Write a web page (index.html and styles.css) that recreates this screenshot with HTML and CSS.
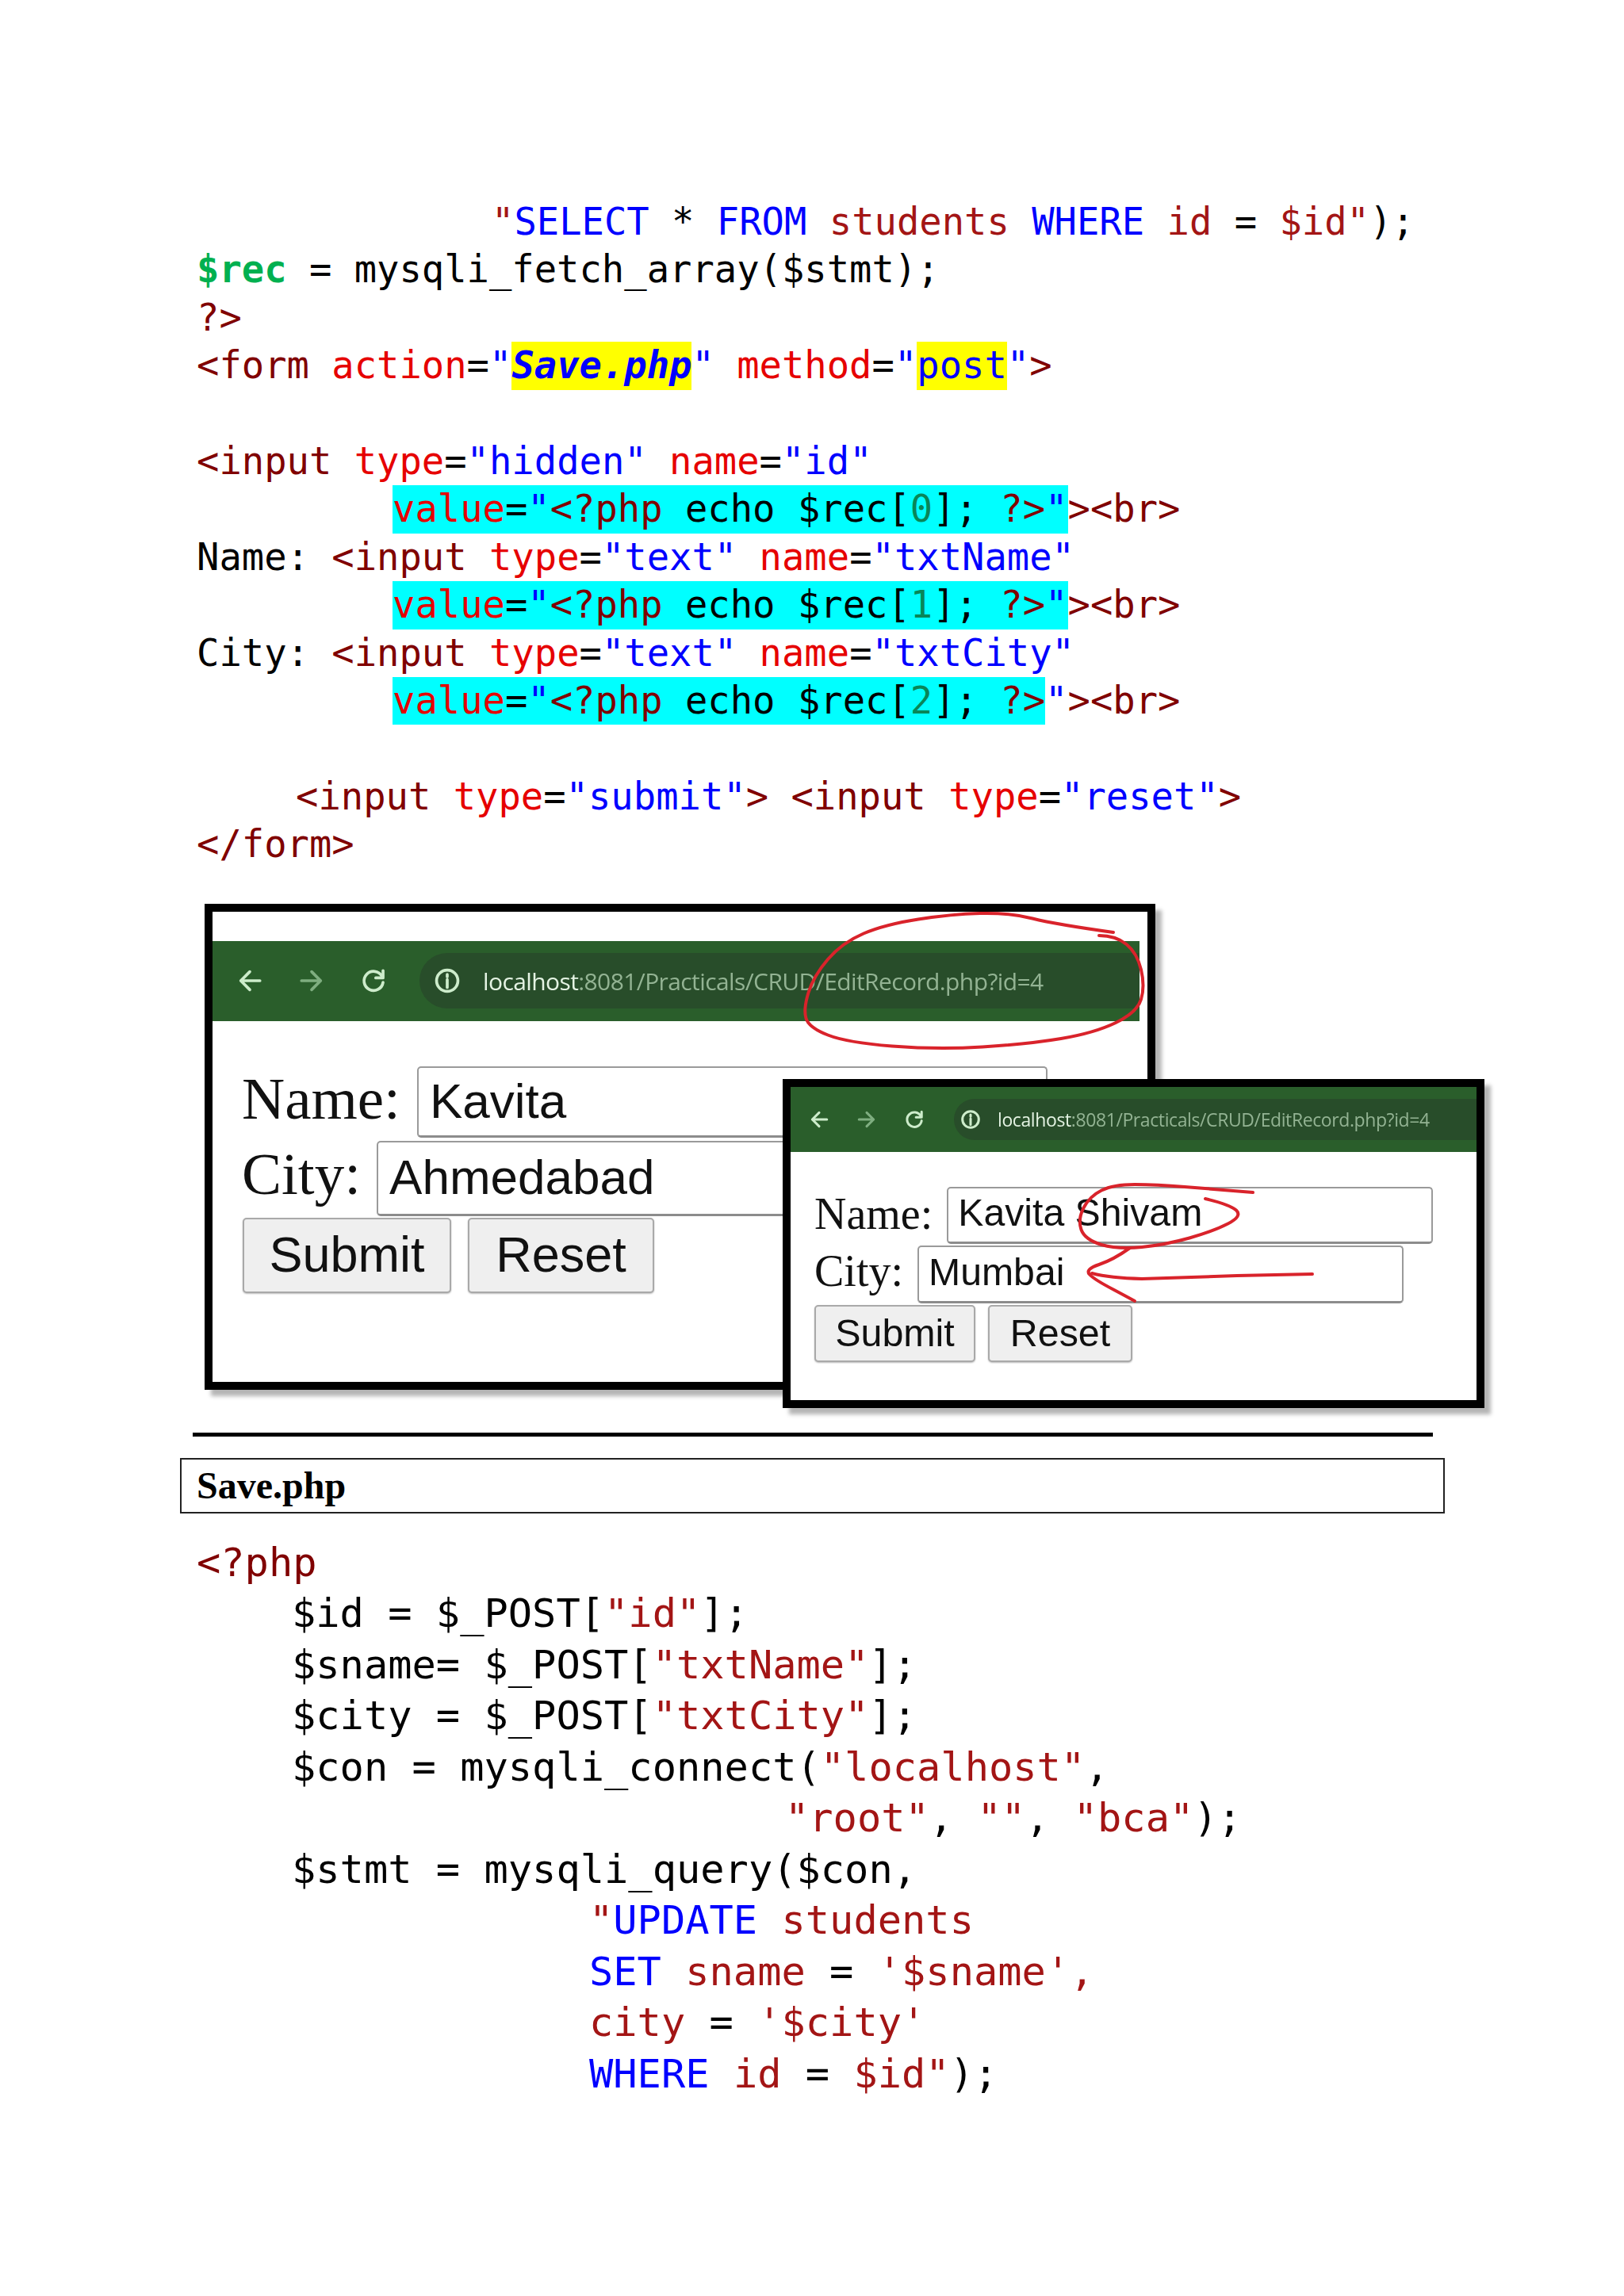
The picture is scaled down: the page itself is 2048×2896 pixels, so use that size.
FILE: index.html
```html
<!DOCTYPE html>
<html lang="en">
<head>
<meta charset="utf-8">
<title>Save.php</title>
<link rel="stylesheet" href="styles.css">
</head>
<body>
<svg class="defs" width="0" height="0" aria-hidden="true">
  <symbol id="i-back" viewBox="0 0 24 24"><path d="M21 12H4M12 4l-8 8 8 8"/></symbol>
  <symbol id="i-fwd" viewBox="0 0 24 24"><path d="M3 12h17M12 4l8 8-8 8"/></symbol>
  <symbol id="i-reload" viewBox="0 0 24 24"><path d="M19.5 8A8.5 8.5 0 1 0 20.5 13.5"/><path d="M20.5 3v6.5H14"/></symbol>
  <symbol id="i-info" viewBox="0 0 24 24"><circle cx="12" cy="12" r="9.5"/><path d="M12 11v7M12 6.5v2"/></symbol>
</svg>

<pre class="code code-a"><span class="ln in1"><span class="s">"</span><span class="k">SELECT</span> * <span class="k">FROM</span> <span class="s">students</span> <span class="k">WHERE</span> <span class="s">id</span> = <span class="s">$id"</span>);</span>
<span class="ln"><span class="g">$rec</span> = mysqli_fetch_array($stmt);</span>
<span class="ln"><span class="t">?&gt;</span></span>
<span class="ln"><span class="t">&lt;form</span> <span class="a">action</span>=<span class="k">"</span><span class="hy bi">Save.php</span><span class="k">"</span> <span class="a">method</span>=<span class="k">"</span><span class="hy k">post</span><span class="k">"</span><span class="t">&gt;</span></span>
<span class="ln"> </span>
<span class="ln"><span class="t">&lt;input</span> <span class="a">type</span>=<span class="k">"hidden"</span> <span class="a">name</span>=<span class="k">"id"</span></span>
<span class="ln in2"><span class="hc"><span class="a">value</span>=<span class="k">"</span><span class="t">&lt;?php</span> echo $rec[<span class="n">0</span>]; <span class="t">?&gt;</span><span class="k">"</span></span><span class="t">&gt;&lt;br&gt;</span></span>
<span class="ln">Name: <span class="t">&lt;input</span> <span class="a">type</span>=<span class="k">"text"</span> <span class="a">name</span>=<span class="k">"txtName"</span></span>
<span class="ln in2"><span class="hc"><span class="a">value</span>=<span class="k">"</span><span class="t">&lt;?php</span> echo $rec[<span class="n">1</span>]; <span class="t">?&gt;</span><span class="k">"</span></span><span class="t">&gt;&lt;br&gt;</span></span>
<span class="ln">City: <span class="t">&lt;input</span> <span class="a">type</span>=<span class="k">"text"</span> <span class="a">name</span>=<span class="k">"txtCity"</span></span>
<span class="ln in2"><span class="hc"><span class="a">value</span>=<span class="k">"</span><span class="t">&lt;?php</span> echo $rec[<span class="n">2</span>]; <span class="t">?&gt;</span></span><span class="k">"</span><span class="t">&gt;&lt;br&gt;</span></span>
<span class="ln"> </span>
<span class="ln in3"><span class="t">&lt;input</span> <span class="a">type</span>=<span class="k">"submit"</span><span class="t">&gt;</span> <span class="t">&lt;input</span> <span class="a">type</span>=<span class="k">"reset"</span><span class="t">&gt;</span></span>
<span class="ln"><span class="t">&lt;/form&gt;</span></span></pre>

<div class="figure">
  <section class="win win-a">
    <div class="bar">
      <svg class="ic"><use href="#i-back"/></svg>
      <svg class="ic dim"><use href="#i-fwd"/></svg>
      <svg class="ic"><use href="#i-reload"/></svg>
      <div class="pill">
        <svg class="ic"><use href="#i-info"/></svg>
        <span class="url"><b>localhost</b>:8081/Practicals/CRUD/EditRecord.php?id=4</span>
      </div>
    </div>
    <div class="form">
      <div class="row row-name"><span class="lab">Name:</span><div class="field">Kavita</div></div>
      <div class="row row-city"><span class="lab">City:</span><div class="field">Ahmedabad</div></div>
      <div class="row row-btn"><div class="btn btn-s">Submit</div><div class="btn btn-r">Reset</div></div>
    </div>
  </section>
  <section class="win win-b">
    <div class="bar">
      <svg class="ic"><use href="#i-back"/></svg>
      <svg class="ic dim"><use href="#i-fwd"/></svg>
      <svg class="ic"><use href="#i-reload"/></svg>
      <div class="pill">
        <svg class="ic"><use href="#i-info"/></svg>
        <span class="url"><b>localhost</b>:8081/Practicals/CRUD/EditRecord.php?id=4</span>
      </div>
    </div>
    <div class="form">
      <div class="row row-name"><span class="lab">Name:</span><div class="field">Kavita Shivam</div></div>
      <div class="row row-city"><span class="lab">City:</span><div class="field">Mumbai</div></div>
      <div class="row row-btn"><div class="btn btn-s">Submit</div><div class="btn btn-r">Reset</div></div>
    </div>
  </section>
  <svg class="ink" viewBox="0 1140 2048 667" aria-hidden="true">
    <path d="M1404 1176Q1332 1166 1302 1158.5Q1272 1151 1236 1152Q1200 1153 1158 1159.5Q1116 1166 1089 1177.5Q1062 1189 1044 1210Q1026 1231 1019.5 1252Q1013 1273 1016.5 1284.5Q1020 1296 1044 1305.5Q1068 1315 1125 1319.5Q1182 1324 1239 1320.5Q1296 1317 1338 1310Q1380 1303 1407 1290Q1434 1277 1439 1260.5Q1444 1244 1439 1223Q1434 1202 1420.5 1191Q1407 1180 1386 1180"/>
    <path d="M1580 1504Q1530 1500 1494 1497Q1458 1494 1431 1494Q1404 1494 1389 1501.5Q1374 1509 1366.5 1523.5Q1359 1538 1363.5 1551Q1368 1563.5 1389 1570Q1410 1576 1440 1573Q1470 1570 1500 1561.5Q1530 1553 1548.5 1543.5Q1567 1534 1559 1526.5Q1550.5 1519 1520 1512"/>
    <path d="M1425 1574Q1404 1589 1386 1595Q1368 1601 1374 1607.5Q1380 1614 1405 1627Q1420 1635 1431 1641"/>
    <path d="M1377 1606Q1400 1612 1440 1613Q1500 1611 1560 1609L1655 1607"/>
  </svg>
</div>

<div class="rule"></div>
<div class="titlebox">Save.php</div>

<pre class="code code-b"><span class="ln"><span class="t">&lt;?php</span></span>
<span class="ln in4">$id = $_POST[<span class="s">"id"</span>];</span>
<span class="ln in4">$sname= $_POST[<span class="s">"txtName"</span>];</span>
<span class="ln in4">$city = $_POST[<span class="s">"txtCity"</span>];</span>
<span class="ln in4">$con = mysqli_connect(<span class="s">"localhost"</span>,</span>
<span class="ln in5"><span class="s">"root"</span>, <span class="s">""</span>, <span class="s">"bca"</span>);</span>
<span class="ln in4">$stmt = mysqli_query($con,</span>
<span class="ln in6"><span class="s">"</span><span class="k">UPDATE</span> <span class="s">students</span></span>
<span class="ln in6"><span class="k">SET</span> <span class="s">sname</span> = <span class="s">'$sname',</span></span>
<span class="ln in6"><span class="s">city</span> = <span class="s">'$city'</span></span>
<span class="ln in6"><span class="k">WHERE</span> <span class="s">id</span> = <span class="s">$id"</span>);</span></pre>
</body>
</html>
```

FILE: styles.css
```css
html, body { margin: 0; padding: 0; background: #fff; }
body { padding-top: 250px; min-height: 2646px; color: #000; }
.defs { position: absolute; }

.code { margin: 0; padding-left: 248px; font-family: "DejaVu Sans Mono", monospace; color: #000; white-space: normal; }
.code-a { font-size: 47.15px; line-height: 60.4px; }
.code-b { font-size: 50.35px; line-height: 64.5px; margin-top: 30px; }
.ln { display: block; white-space: pre; }
.in1 { padding-left: 372px; }
.in2 { padding-left: 247px; }
.in3 { padding-left: 125px; }
.in4 { padding-left: 120px; }
.in5 { padding-left: 742px; }
.in6 { padding-left: 495px; }

.t { color: #800000; }
.a { color: #e60000; }
.k { color: #0000ff; }
.s { color: #a31515; }
.n { color: #098658; }
.g { color: #00b050; font-weight: bold; }
.bi { color: #0000ff; font-weight: bold; font-style: italic; }
.hy { display: inline-block; background: #ffff00; }
.hc { display: inline-block; background: #00ffff; }

.figure { position: relative; height: 667px; margin-top: 44px; }
.ink { position: absolute; left: 0; top: 0; width: 2048px; height: 667px; fill: none; stroke: #d9232b; stroke-width: 4; stroke-linecap: round; stroke-linejoin: round; pointer-events: none; }

.win { position: absolute; box-sizing: border-box; background: #fff; border: 10px solid #000; box-shadow: 8px 8px 5px #b5b5b5; overflow: hidden; }
.win-a { left: 258px; top: 0; width: 1199px; height: 613px; }
.win-b { left: 987px; top: 221px; width: 885px; height: 415px; }

.bar { display: flex; align-items: center; box-sizing: border-box; background: #2a5e2b; filter: blur(0.6px); }
.pill { display: flex; align-items: center; flex: 1; background: #284d2a; }
.ic { flex: none; fill: none; stroke: #cdeccb; stroke-linecap: round; stroke-linejoin: round; }
.ic.dim { stroke: #7fae80; }
.url { font-family: "Open Sans", sans-serif; color: #93b393; white-space: nowrap; }
.url b { font-weight: 400; color: #e4f3e3; }

.form { display: flex; flex-direction: column; filter: blur(0.5px); }
.row { display: flex; align-items: center; }
.lab { font-family: "Liberation Serif", serif; color: #111; }
.field { box-sizing: border-box; flex: none; display: flex; align-items: center; height: 100%; background: #fff; font-family: "Liberation Sans", sans-serif; color: #111; border: 2px solid #9a9a9a; border-bottom: 3px solid #8c8c8c; border-radius: 5px; }
.btn { box-sizing: border-box; display: flex; align-items: center; justify-content: center; height: 100%; font-family: "Liberation Sans", sans-serif; color: #111; background: #efefef; border: 2px solid #a9a9a9; border-radius: 5px; box-shadow: 0 1px 2px #bbb; }

.win-a .bar { margin: 37px 10px 0 0; height: 101px; padding-left: 30px; gap: 44px; }
.win-a .ic { width: 34px; height: 34px; stroke-width: 2.6; }
.win-a .pill { height: 70px; margin-left: -3px; padding-left: 18px; gap: 28px; border-radius: 35px 0 0 35px; }
.win-a .url { font-size: 30px; letter-spacing: -0.6px; }
.win-a .form { padding: 57px 0 0 37px; }
.win-a .lab { font-size: 75px; }
.win-a .row-name { height: 90px; gap: 21px; }
.win-a .row-name .lab { margin-bottom: 8px; }
.win-a .row-city { height: 95px; margin-top: 4px; gap: 20px; }
.win-a .row-city .lab { margin-bottom: 10px; }
.win-a .field { width: 795px; padding: 0 0 2px 14px; font-size: 62px; }
.win-a .row-btn { height: 95px; margin-top: 2px; gap: 21px; padding-left: 1px; }
.win-a .btn { font-size: 63px; padding-bottom: 3px; }
.win-a .btn-s { width: 263px; }
.win-a .btn-r { width: 235px; }

.win-b .bar { height: 82px; padding-left: 23px; gap: 34px; }
.win-b .ic { width: 26px; height: 26px; stroke-width: 2.8; }
.win-b .pill { height: 52px; margin-left: 3px; padding-left: 8px; gap: 21px; border-radius: 26px 0 0 26px; }
.win-b .url { font-size: 23px; letter-spacing: -0.4px; }
.win-b .form { padding: 44px 0 0 30px; }
.win-b .lab { font-size: 56px; }
.win-b .row { gap: 18px; }
.win-b .row-name { height: 72px; }
.win-b .row-name .lab { margin-bottom: 3px; }
.win-b .row-city { height: 73px; margin-top: 2px; }
.win-b .row-city .lab { margin-bottom: 9px; }
.win-b .field { width: 613px; padding: 0 0 6px 12px; font-size: 48.2px; }
.win-b .row-btn { height: 72px; margin-top: 2px; gap: 16px; }
.win-b .btn { font-size: 48.4px; padding-bottom: 2px; }
.win-b .btn-s { width: 203px; }
.win-b .btn-r { width: 182px; }

.rule { height: 5px; width: 1564px; margin-left: 243px; background: #000; }
.titlebox { box-sizing: border-box; width: 1595px; height: 70px; margin: 27px 0 0 227px; padding: 4px 0 0 19px; border: 2px solid #222; font: bold 48px/58px "Liberation Serif", serif; }
```
